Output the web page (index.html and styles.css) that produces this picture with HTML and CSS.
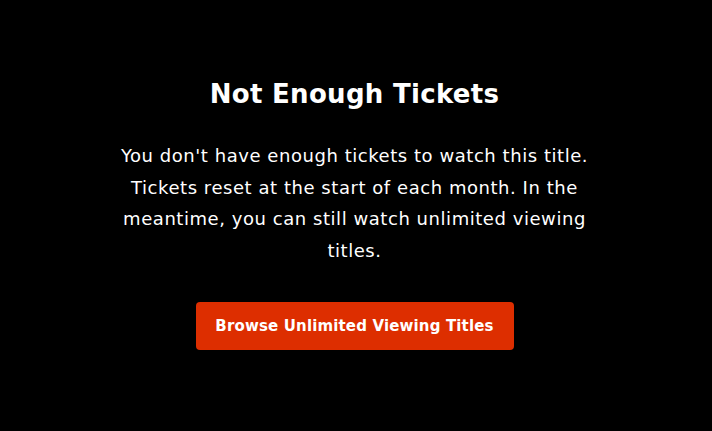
FILE: index.html
```html
<!DOCTYPE html>
<html>
<head>
<meta charset="utf-8">
<link rel="stylesheet" href="styles.css">
</head>
<body>
<main class="page">
  <section class="notice">
    <h1 class="notice-title">Not Enough Tickets</h1>
    <p class="notice-text">You don't have enough tickets to watch this title. Tickets reset at the start of each month. In the meantime, you can still watch unlimited viewing titles.</p>
    <button class="notice-button">Browse Unlimited Viewing Titles</button>
  </section>
</main>
</body>
</html>
```
FILE: styles.css
```css
html, body {
  margin: 0;
  padding: 0;
  background: #000;
  height: 100%;
}
.page {
  box-sizing: border-box;
  height: 100%;
  padding-bottom: 3px;
  padding-right: 3px;
  display: flex;
  align-items: center;
  justify-content: center;
  font-family: "DejaVu Sans", "Liberation Sans", sans-serif;
  color: #fff;
}
.notice {
  width: 484px;
  display: flex;
  flex-direction: column;
  align-items: center;
  text-align: center;
}
.notice-title {
  margin: 0 0 30px;
  font-size: 26px;
  font-weight: 700;
  line-height: 32px;
  letter-spacing: 0.3px;
}
.notice-text {
  margin: 0 0 36px;
  font-size: 18px;
  line-height: 31.5px;
  letter-spacing: 0.55px;
}
.notice-button {
  width: 318px;
  height: 48px;
  border: none;
  border-radius: 4px;
  background: #dd2e00;
  color: #fff;
  font-family: inherit;
  font-size: 15px;
  font-weight: 700;
  letter-spacing: 0.15px;
}
```
